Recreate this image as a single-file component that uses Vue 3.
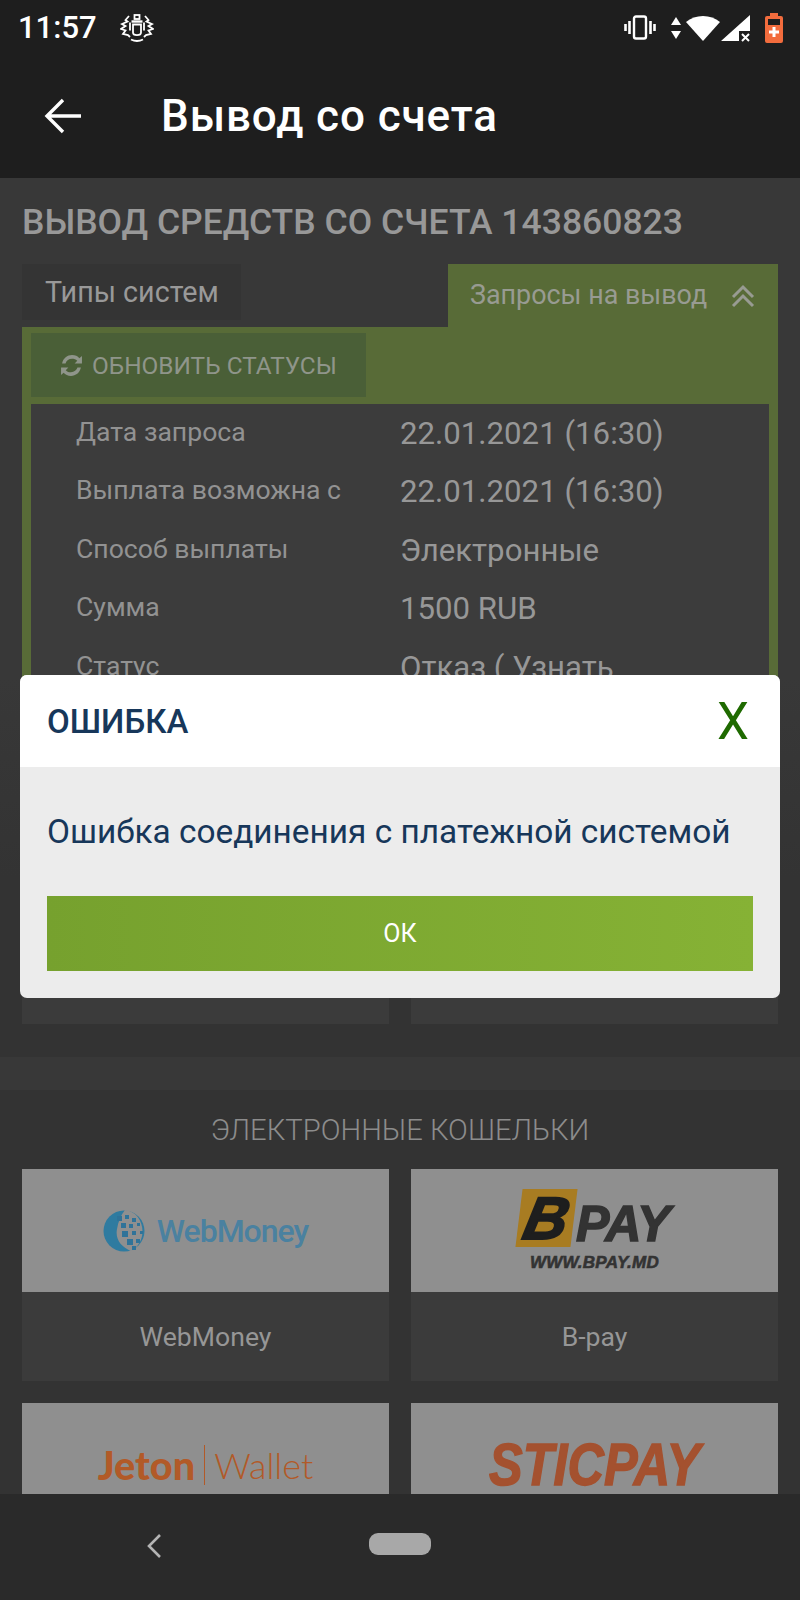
<script setup>
const rows = [
  { label: 'Дата запроса', value: '22.01.2021 (16:30)' },
  { label: 'Выплата возможна с', value: '22.01.2021 (16:30)' },
  { label: 'Способ выплаты', value: 'Электронные' },
  { label: 'Сумма', value: '1500 RUB' },
  { label: 'Статус', value: 'Отказ ( Узнать' },
];
</script>

<template>
  <div class="phone">
    <div class="status">
      <span class="time">11:57</span>
      <svg class="crest" width="34" height="28" viewBox="0 0 34 28" fill="none" stroke="#fff" stroke-width="1.8">
        <rect x="14.500" y="1" width="5" height="4" />
        <path d="M11.500 7.500h11" stroke-width="2.400" />
        <path d="M13 10.500v8c0 3.500 8 3.500 8 0v-8z" />
        <path d="M9 2 5.500 6l2 1.500L2 10l3.500 2L1 15l4.500 1.500L3 20l5 1 2 2" />
        <path d="M25 2l3.500 4-2 1.500L32 10l-3.500 2L33 15l-4.500 1.500L31 20l-5 1-2 2" />
        <path d="M10 8.500v8M24 8.500v8" />
        <path d="M11 25.500c4 2 8 2 12 0" />
      </svg>
      <div class="status-right">
        <svg width="32" height="28" viewBox="0 0 32 28" fill="none" stroke="#fff">
          <rect x="10" y="2.500" width="12" height="22" rx="2" stroke-width="2.400" />
          <path d="M5.500 7v13M1.500 10v7M26.500 7v13M30.500 10v7" stroke-width="2.600" />
        </svg>
        <svg class="updown" width="12" height="24" viewBox="0 0 12 24" fill="#fff">
          <path d="M6 1l5 8H1zM6 23 1 15h10z" />
        </svg>
        <svg class="wifi" width="34" height="28" viewBox="0 0 34 28" fill="#fff">
          <path d="M17 27 0 8C9 0 25 0 34 8z" />
        </svg>
        <svg class="signal" width="30" height="28" viewBox="0 0 30 28" fill="#fff">
          <path d="M29 1v16H18v10H0z" />
          <path d="M21 20l7 7M28 20l-7 7" stroke="#fff" stroke-width="2" />
        </svg>
        <svg class="battery" width="18" height="30" viewBox="0 0 18 30">
          <path d="M5 0h8v3h3a2 2 0 0 1 2 2v23a2 2 0 0 1-2 2H2a2 2 0 0 1-2-2V5a2 2 0 0 1 2-2h3z" fill="#f26c3d" />
          <rect x="3" y="6" width="12" height="6" fill="#1e1e1e" />
          <path d="M7.500 14h3v3.500H14v3h-3.500V24h-3v-3.500H4v-3h3.500z" fill="#fff" />
        </svg>
      </div>
    </div>

    <header class="appbar">
      <svg class="back" width="38" height="36" viewBox="0 0 38 36" fill="none" stroke="#fff" stroke-width="3.400">
        <path d="M37 18H3M19 2 3 18l16 16" />
      </svg>
      <h1>Вывод со счета</h1>
    </header>

    <main class="content">
      <h2>ВЫВОД СРЕДСТВ СО СЧЕТА 143860823</h2>

      <div class="tabs">
        <div class="tab">Типы систем</div>
        <div class="tab tab-active">
          Запросы на вывод
          <svg width="24" height="24" viewBox="0 0 24 24" fill="none" stroke="#989b92" stroke-width="3">
            <path d="M2 13 12 3l10 10M2 22l10-10 10 10" />
          </svg>
        </div>
      </div>

      <section class="panel">
        <button class="refresh">
          <svg width="23" height="23" viewBox="0 0 22 22" fill="#8f958a">
            <path d="M2 9C3 4 7 1 11.500 1c3 0 5.500 1 7 3L21 2v7h-7l2.500-2.500C15 5 13.500 4.500 11.500 4.500 8.500 4.500 6 6.500 5.300 9z" />
            <path d="M20 13c-1 5-5 8-9.500 8-3 0-5.500-1-7-3L1 20v-7h7l-2.500 2.500C7 17 8.500 17.500 10.500 17.500c3 0 5.500-2 6.200-4.500z" />
          </svg>
          ОБНОВИТЬ СТАТУСЫ
        </button>
        <div class="table">
          <div v-for="row in rows" :key="row.label" class="row">
            <span class="label">{{ row.label }}</span>
            <span class="value">{{ row.value }}</span>
          </div>
        </div>
      </section>

      <div class="grid grid-top">
        <div class="stub"></div>
        <div class="stub"></div>
      </div>

      <section class="wallets">
        <h3>ЭЛЕКТРОННЫЕ КОШЕЛЬКИ</h3>
        <div class="grid">
          <div class="card">
            <div class="logo">
              <div class="webmoney">
                <svg width="42" height="42" viewBox="0 0 42 42">
                  <circle cx="21" cy="21" r="20.500" fill="#2f7ba0" />
                  <path d="M22 0c20 2 24 32 6 41-10-4-16-12-14-22 1-7 4-14 8-19z" fill="#8f8f8f" />
                  <g fill="#2f7399">
                    <rect x="14" y="6" width="5" height="5" />
                    <rect x="22" y="5" width="4" height="4" />
                    <rect x="29" y="8" width="4" height="4" />
                    <rect x="18" y="13" width="5" height="5" />
                    <rect x="26" y="14" width="4" height="4" />
                    <rect x="34" y="13" width="3" height="3" />
                    <rect x="19" y="21" width="6" height="6" />
                    <rect x="29" y="21" width="4" height="4" />
                    <rect x="37" y="21" width="3" height="3" />
                    <rect x="24" y="29" width="6" height="6" />
                    <rect x="33" y="29" width="4" height="4" />
                    <rect x="29" y="36" width="4" height="4" />
                  </g>
                </svg>
                <span>WebMoney</span>
              </div>
            </div>
            <div class="caption">WebMoney</div>
          </div>
          <div class="card">
            <div class="logo">
              <div class="bpay">
                <div class="bpay-top">
                  <span class="bpay-b"><i>B</i></span>
                  <span class="bpay-pay">PAY</span>
                </div>
                <span class="bpay-url">WWW.BPAY.MD</span>
              </div>
            </div>
            <div class="caption">B-pay</div>
          </div>
          <div class="card">
            <div class="logo">
              <div class="jeton"><b>Jeton</b><span>Wallet</span></div>
            </div>
          </div>
          <div class="card">
            <div class="logo">
              <span class="sticpay">STICPAY</span>
            </div>
          </div>
        </div>
      </section>
    </main>

    <nav class="navbar">
      <svg class="nav-back" width="16" height="24" viewBox="0 0 16 24" fill="none" stroke="#b4b4b4" stroke-width="2.600">
        <path d="M14 1 3 12l11 11" />
      </svg>
      <div class="pill"></div>
    </nav>

    <div class="modal">
      <div class="modal-head">
        <span>ОШИБКА</span>
        <span class="close">X</span>
      </div>
      <div class="modal-body">
        <p>Ошибка соединения с платежной системой</p>
        <button class="ok">ОК</button>
      </div>
    </div>
  </div>
</template>

<style>
html, body {
  margin: 0;
  background: #2a2a2a;
}
</style>

<style scoped>
* {
  box-sizing: border-box;
}

.phone {
  position: relative;
  width: 800px;
  height: 1600px;
  display: flex;
  flex-direction: column;
  overflow: hidden;
  font-family: Roboto, "Liberation Sans", sans-serif;
  background: #333;
}

.status {
  height: 55px;
  flex: none;
  background: #1e1e1e;
  display: flex;
  align-items: center;
  padding: 0 17px 0 18px;
  color: #fff;
}

.time {
  font-size: 31px;
  line-height: 55px;
  font-weight: 500;
  width: 102px;
}

.status-right {
  margin-left: auto;
  display: flex;
  align-items: center;
}

.updown {
  margin-left: 14px;
}

.wifi {
  margin-left: 4px;
}

.signal {
  margin-left: 1px;
}

.battery {
  margin-left: 14px;
}

.appbar {
  height: 123px;
  flex: none;
  background: #1e1e1e;
  display: flex;
  align-items: center;
  padding: 0 0 2px 44px;
}

.appbar h1 {
  margin: 0 0 0 79px;
  color: #fff;
  font-size: 44px;
  font-weight: 500;
  letter-spacing: .9px;
}

.back {
  flex: none;
}

.content {
  flex: 1;
  min-height: 0;
  overflow: hidden;
  background: linear-gradient(#383838, #383838 500px, #333 700px);
}

h2 {
  margin: 0;
  padding: 23px 22px 0;
  height: 86px;
  font-size: 35.500px;
  line-height: 42px;
  font-weight: 500;
  color: #989898;
  white-space: nowrap;
}

.tabs {
  display: flex;
  justify-content: space-between;
  align-items: flex-start;
  padding: 0 22px;
}

.tab {
  width: 219px;
  height: 56px;
  padding-left: 23px;
  background: #343434;
  color: #999;
  font-size: 28.700px;
  line-height: 57px;
}

.tab-active {
  width: 330px;
  height: 63px;
  padding-left: 22px;
  display: flex;
  align-items: center;
  gap: 24px;
  background: #586b37;
  color: #989b92;
  font-size: 26.900px;
  white-space: nowrap;
}

.panel {
  margin: 0 22px;
  padding: 6px 9px 0;
  height: 620px;
  background: #586b37;
}

.refresh {
  display: flex;
  align-items: center;
  gap: 9px;
  width: 335px;
  height: 64px;
  padding: 0 0 0 29px;
  border: 0;
  background: #4a5f37;
  color: #8f958a;
  font-family: inherit;
  font-size: 24.400px;
  white-space: nowrap;
}

.table {
  margin-top: 7px;
  height: 540px;
  background: #3c3c3c;
}

.row {
  display: flex;
  align-items: center;
  height: 58.500px;
  padding-left: 45px;
}

.label {
  width: 324px;
  margin-top: -4px;
  color: #929292;
  font-size: 26.600px;
}

.value {
  color: #979797;
  font-size: 31.200px;
}

.grid {
  display: grid;
  grid-template-columns: 367px 367px;
  justify-content: space-between;
  gap: 22px;
  padding: 0 22px;
}

.grid-top {
  padding-bottom: 33px;
}

.stub {
  height: 77px;
  background: #3b3b3b;
}

.wallets {
  background: linear-gradient(#383838, #383838 33px, #333 33px);
}

h3 {
  margin: 0;
  padding-top: 55px;
  height: 112px;
  text-align: center;
  color: #8c8c8c;
  font-size: 29.200px;
  line-height: 36px;
  font-weight: 300;
}

.card {
  height: 212px;
  background: #3b3b3b;
}

.logo {
  height: 123px;
  display: flex;
  align-items: center;
  justify-content: center;
  background: #8f8f8f;
}

.caption {
  height: 89px;
  display: flex;
  align-items: center;
  justify-content: center;
  color: #969696;
  font-size: 26.600px;
}

.webmoney {
  display: flex;
  align-items: center;
  gap: 12px;
  color: #4a81a0;
  font-size: 32px;
  font-weight: 500;
  letter-spacing: -1px;
}

.bpay {
  display: flex;
  flex-direction: column;
  align-items: center;
  font-family: "Liberation Sans", sans-serif;
  color: #333;
  font-weight: 700;
  font-style: italic;
}

.bpay-top {
  display: flex;
  align-items: flex-end;
}

.bpay-b {
  width: 55px;
  height: 58px;
  display: flex;
  align-items: center;
  justify-content: center;
  background: #a87c22;
  transform: skewX(-7deg);
  color: #1e1e1e;
  font-size: 60px;
  -webkit-text-stroke: 2px #1e1e1e;
}

.bpay-b i {
  display: block;
  transform: skewX(-5deg);
}

.bpay-pay {
  margin-left: 2px;
  font-size: 50px;
  line-height: 45px;
  letter-spacing: -.5px;
  -webkit-text-stroke: 1.500px #333;
}

.bpay-url {
  margin-top: 6px;
  font-size: 17px;
  letter-spacing: .3px;
  -webkit-text-stroke: .6px #333;
}

.jeton {
  display: flex;
  align-items: center;
  color: #b25a28;
  font-family: Lato, sans-serif;
  font-size: 36px;
}

.jeton b {
  padding-right: 9px;
  font-size: 39.600px;
  font-weight: 900;
}

.jeton span {
  border-left: 1.500px solid #b25a28;
  padding-left: 9px;
  font-weight: 300;
  line-height: 40px;
}

.sticpay {
  font-family: "Liberation Sans", sans-serif;
  font-size: 60px;
  font-weight: 700;
  font-style: italic;
  color: #a4512f;
  transform: scaleX(.84);
  -webkit-text-stroke: 1.500px #a4512f;
}

.navbar {
  position: relative;
  height: 106px;
  flex: none;
  background: #2a2a2a;
  display: flex;
  align-items: center;
  justify-content: center;
  padding-bottom: 6px;
}

.nav-back {
  position: absolute;
  left: 146px;
  top: 40px;
}

.pill {
  width: 62px;
  height: 22px;
  border-radius: 9px;
  background: #a8a8a8;
}

.modal {
  position: absolute;
  left: 20px;
  top: 675px;
  width: 760px;
  height: 323px;
  border-radius: 7px;
  overflow: hidden;
  background: #ececec;
}

.modal-head {
  height: 92px;
  padding: 0 31px 0 27px;
  display: flex;
  align-items: center;
  justify-content: space-between;
  background: #fff;
  color: #17375a;
  font-size: 33px;
  font-weight: 500;
}

.close {
  color: #1f6a00;
  font-size: 51px;
  font-weight: 400;
}

.modal-body {
  padding: 0 27px;
}

.modal-body p {
  margin: 0;
  padding-top: 43px;
  height: 129px;
  color: #17375a;
  font-size: 33.400px;
  line-height: 44px;
  white-space: nowrap;
}

.ok {
  display: block;
  width: 100%;
  height: 75px;
  border: 0;
  background: linear-gradient(90deg, #76a12e, #86b235);
  color: #fff;
  font-family: inherit;
  font-size: 25px;
}
</style>
